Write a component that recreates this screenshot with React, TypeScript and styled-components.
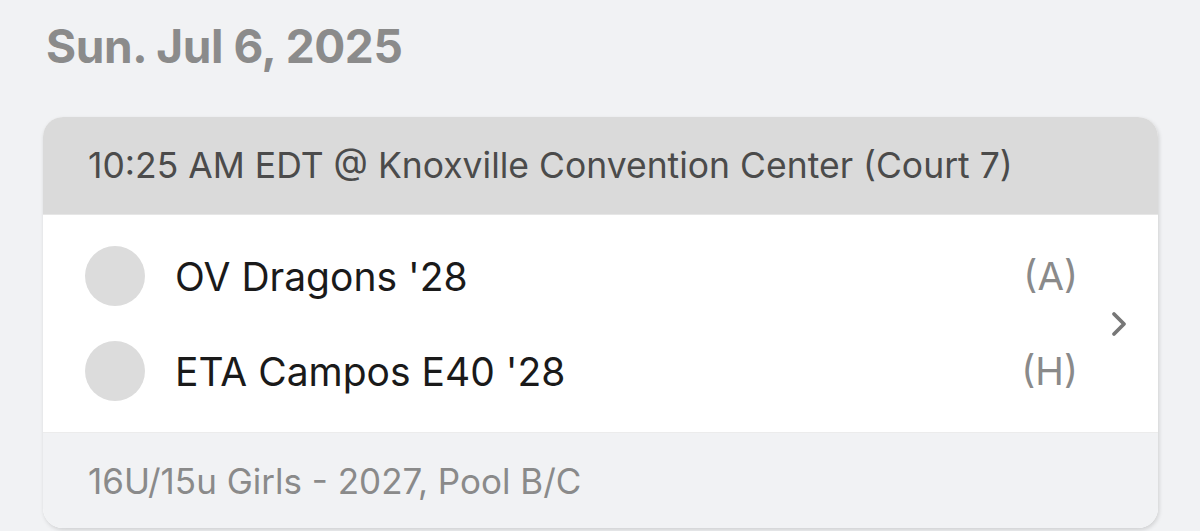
import styled, { createGlobalStyle } from "styled-components";

const GlobalStyle = createGlobalStyle`
  html, body {
    margin: 0;
    padding: 0;
    background-color: #f1f2f4;
    font-family: Inter, "Noto Sans", sans-serif;
  }
`;

const games = [
  { name: "OV Dragons '28", side: "(A)" },
  { name: "ETA Campos E40 '28", side: "(H)" },
];

const App = () => {
  return (
    <Page>
      <GlobalStyle />
      <DateTitle>Sun. Jul 6, 2025</DateTitle>
      <Card>
        <CardHead>10:25 AM EDT @ Knoxville Convention Center (Court 7)</CardHead>
        <CardBody>
          <Teams>
            {games.map((g) => (
              <TeamRow key={g.name}>
                <Avatar />
                <TeamName>{g.name}</TeamName>
                <Side>{g.side}</Side>
              </TeamRow>
            ))}
          </Teams>
          <Chevron>
            <svg width="16" height="26" viewBox="0 0 16 26" fill="none">
              <path
                d="M3 3l10 10-10 10"
                stroke="#777777"
                strokeWidth="3.8"
                strokeLinecap="round"
                strokeLinejoin="round"
              />
            </svg>
          </Chevron>
        </CardBody>
        <CardFoot>16U/15u Girls - 2027, Pool B/C</CardFoot>
      </Card>
    </Page>
  );
};

export default App;

const Page = styled.div`
  width: 1200px;
  height: 531px;
  overflow: hidden;
  padding: 18px 42px 0 43px;
  box-sizing: border-box;
`;

const DateTitle = styled.h1`
  margin: 0 0 0 3px;
  font-size: 46px;
  line-height: 56px;
  font-weight: 700;
  letter-spacing: -0.4px;
  color: #8b8b8b;
`;

const Card = styled.div`
  margin-top: 43px;
  border-radius: 20px;
  overflow: hidden;
  background-color: #ffffff;
  box-shadow: 1px 2px 4px rgba(0, 0, 0, 0.14);
`;

const CardHead = styled.div`
  height: 97px;
  display: flex;
  align-items: center;
  padding-left: 45px;
  background-color: #dadada;
  font-size: 35.5px;
  color: #4b4b4b;
`;

const CardBody = styled.div`
  height: 219px;
  display: flex;
  align-items: center;
  border-top: 1px solid #e6e6e6;
  border-bottom: 1px solid #ececec;
  box-sizing: border-box;
`;

const Teams = styled.div`
  flex: 1;
  display: flex;
  flex-direction: column;
  gap: 35px;
  padding-left: 42px;
`;

const TeamRow = styled.div`
  display: flex;
  align-items: center;
  height: 60px;
`;

const Avatar = styled.div`
  width: 60px;
  height: 60px;
  border-radius: 50%;
  background-color: #dcdcdc;
  margin-right: 30px;
`;

const TeamName = styled.span`
  flex: 1;
  font-size: 39px;
  color: #1a1a1a;
`;

const Side = styled.span`
  font-size: 38.5px;
  color: #8a8a8a;
`;

const Chevron = styled.div`
  width: 80px;
  display: flex;
  justify-content: center;
  padding-left: 2px;
  box-sizing: border-box;
`;

const CardFoot = styled.div`
  height: 95px;
  display: flex;
  align-items: center;
  padding-left: 45px;
  background-color: #f1f2f4;
  font-size: 35px;
  color: #8a8a8a;
`;
